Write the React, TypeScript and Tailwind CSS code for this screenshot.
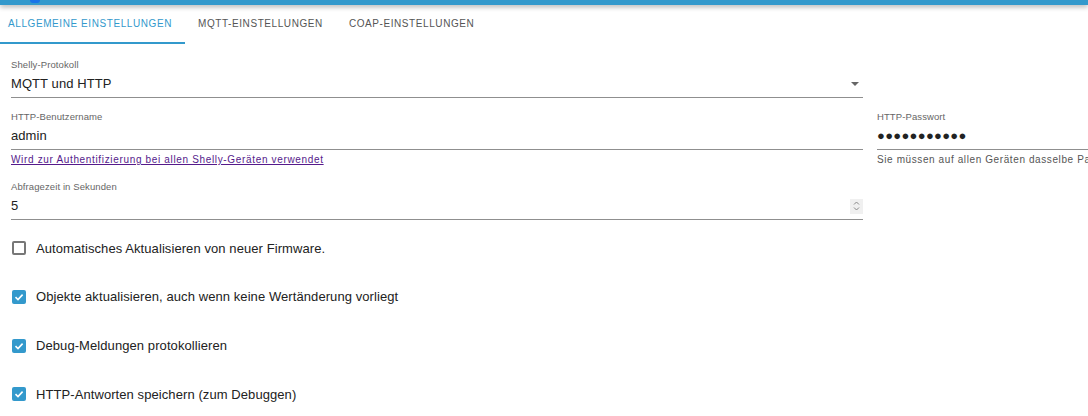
import React, { useState } from 'react';

const TABS = ['Allgemeine Einstellungen', 'MQTT-Einstellungen', 'CoAP-Einstellungen'];

const Field: React.FC<{ label: string; children: React.ReactNode; helper?: React.ReactNode; className?: string }> = ({ label, children, helper, className }) => (
  <div className={`flex flex-col ${className || ''}`}>
    <label className="text-[9.5px] text-[#666] leading-[12px] h-[12px] tracking-[0.1px]">{label}</label>
    <div className="flex items-center h-[26px] border-b border-[#8f8f8f] text-[13px] text-[#222] tracking-[0.08px] box-content">{children}</div>
    {helper}
  </div>
);

const Check: React.FC<{ checked: boolean; label: string }> = ({ checked, label }) => (
  <div className="flex items-center h-[48.7px] gap-[10px] pl-[1px]">
    {checked ? (
      <span className="w-[14px] h-[14px] rounded-[2px] bg-[#3399cc] flex items-center justify-center">
        <svg width="10" height="10" viewBox="0 0 10 10">
          <path d="M1.5 5.2 L4 7.6 L8.6 2.6" fill="none" stroke="white" strokeWidth="1.6" />
        </svg>
      </span>
    ) : (
      <span className="w-[14px] h-[14px] rounded-[2px] border-2 border-[#777] bg-white" />
    )}
    <span className="text-[13px] text-[#222] tracking-[0.08px]">{label}</span>
  </div>
);

const App: React.FC = () => {
  const [tab] = useState(0);

  return (
    <div className="w-[1088px] h-[416px] overflow-hidden bg-white" style={{ fontFamily: '"Liberation Sans", Arial, sans-serif' }}>
      {/* top bar */}
      <div className="relative h-[5px] bg-[#3399cc] shadow-[0_2px_5px_rgba(0,0,0,0.3)]">
        <div className="absolute left-[30px] top-0 w-[10px] h-[3px] rounded-b-full bg-[#1a73e8]" />
      </div>

      {/* tabs */}
      <div className="flex h-[39px]">
        {TABS.map((t, i) => (
          <div
            key={t}
            className={`flex items-center uppercase text-[10px] tracking-[0.58px] border-b-2 ${
              i === tab ? 'text-[#3399cc] border-[#3399cc] pl-[8px] pr-[13px]' : 'text-[#555] border-transparent px-[13px]'
            }`}
          >
            {t}
          </div>
        ))}
      </div>

      <div className="pl-[11px] pt-[15px]">
        <div className="grid grid-cols-[852px_852px] gap-x-[14px]">
          <Field label="Shelly-Protokoll">
            <span className="flex-1">MQTT und HTTP</span>
            <svg width="10" height="6" viewBox="0 0 10 6" className="mr-[3px]">
              <path d="M1 1 L9 1 L5 5 Z" fill="#666" />
            </svg>
          </Field>
          <div />

          <Field
            label="HTTP-Benutzername"
            className="mt-[13px]"
            helper={
              <a href="#" className="text-[10px] text-[#551a8b] underline mt-[4px] leading-[12px] tracking-[0.66px] self-start">
                Wird zur Authentifizierung bei allen Shelly-Geräten verwendet
              </a>
            }
          >
            admin
          </Field>
          <Field
            label="HTTP-Passwort"
            className="mt-[13px]"
            helper={
              <span className="text-[10px] text-[#555] mt-[4px] leading-[12px] tracking-[0.6px] whitespace-nowrap">
                Sie müssen auf allen Geräten dasselbe Passwort verwenden
              </span>
            }
          >
            <span className="text-[13px] tracking-[0.3px]">●●●●●●●●●●●</span>
          </Field>

          <Field label="Abfragezeit in Sekunden" className="mt-[15px]">
            <span className="flex-1">5</span>
            <span className="w-[13px] h-[15px] bg-[#f0f0f0] flex flex-col items-center justify-center gap-[2px]">
              <svg width="7" height="4" viewBox="0 0 7 4"><path d="M1 3.5 L3.5 1 L6 3.5" fill="none" stroke="#888" strokeWidth="1" /></svg>
              <svg width="7" height="4" viewBox="0 0 7 4"><path d="M1 0.5 L3.5 3 L6 0.5" fill="none" stroke="#888" strokeWidth="1" /></svg>
            </span>
          </Field>
          <div />
        </div>

        <div className="flex flex-col mt-[4px]">
          <Check checked={false} label="Automatisches Aktualisieren von neuer Firmware." />
          <Check checked label="Objekte aktualisieren, auch wenn keine Wertänderung vorliegt" />
          <Check checked label="Debug-Meldungen protokollieren" />
          <Check checked label="HTTP-Antworten speichern (zum Debuggen)" />
        </div>
      </div>
    </div>
  );
};

export default App;
